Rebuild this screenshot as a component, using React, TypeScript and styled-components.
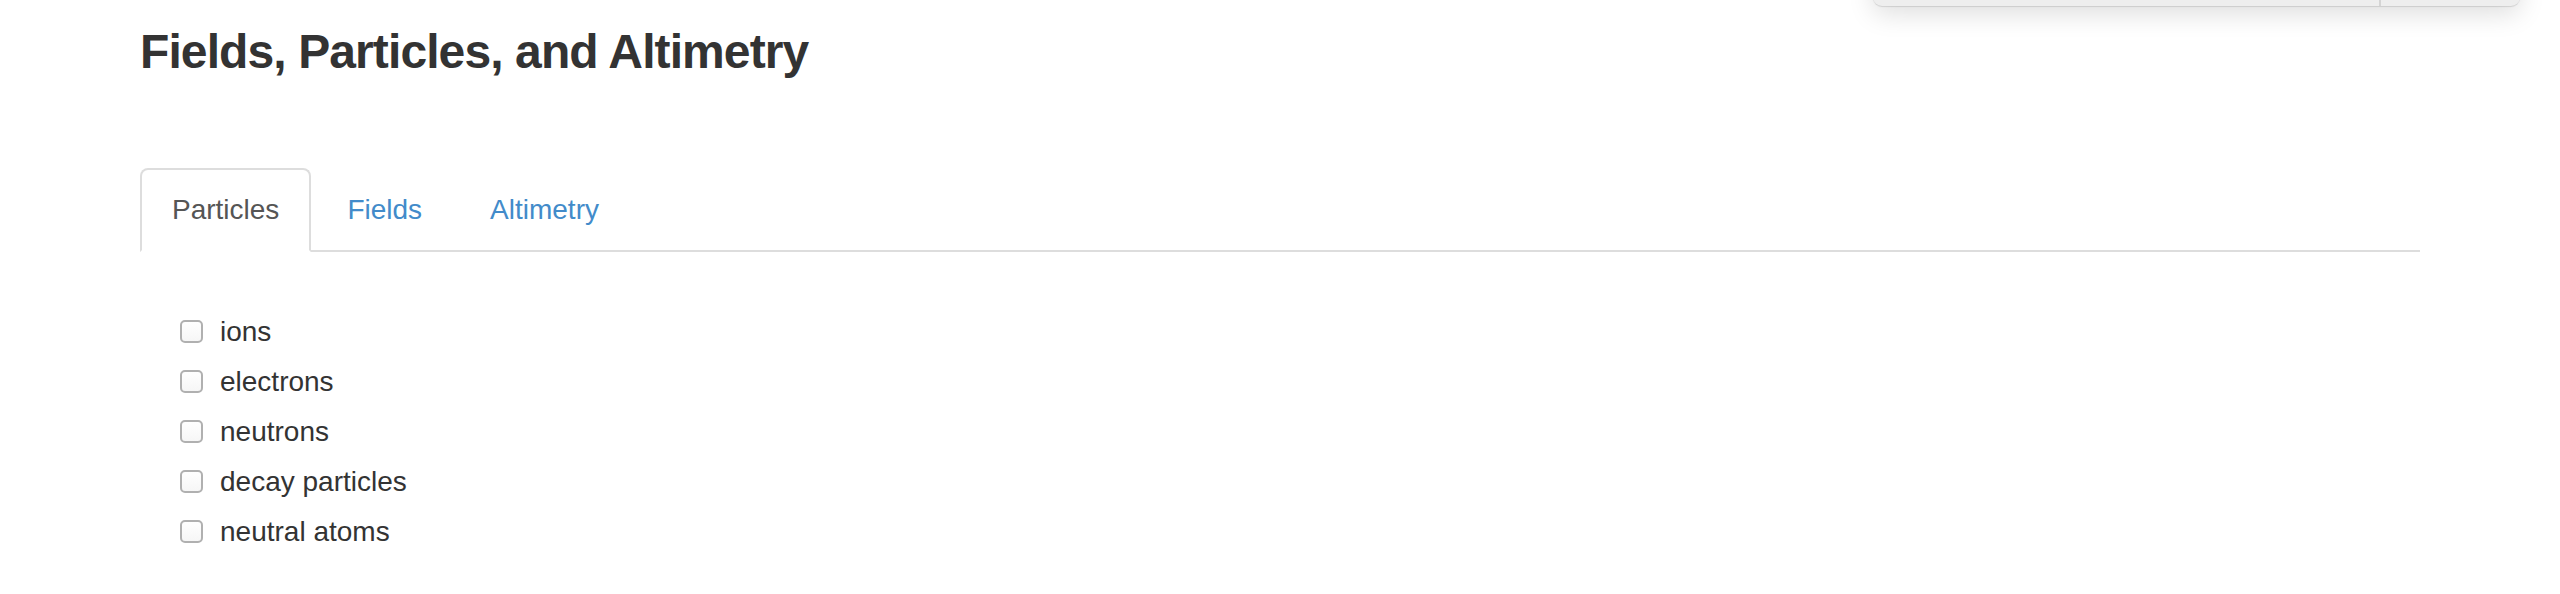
import React, { useState } from "react";
import styled, { createGlobalStyle } from "styled-components";

const GlobalStyle = createGlobalStyle`
  html, body {
    margin: 0;
    padding: 0;
    background: #ffffff;
  }
  body {
    font-family: "Liberation Sans", Arial, Helvetica, sans-serif;
    color: #333333;
    overflow: hidden;
  }
`;

const Page = styled.div`
  position: relative;
  width: 2560px;
  height: 594px;
  overflow: hidden;
  background: #ffffff;
`;

const FloatingBar = styled.div`
  position: absolute;
  top: -40px;
  left: 1873px;
  width: 647px;
  height: 46px;
  display: flex;
  justify-content: flex-end;
  background: #eeeeee;
  border-radius: 9px;
  box-shadow: 0 1px 1px rgba(0, 0, 0, 0.12), 0 8px 26px rgba(0, 0, 0, 0.13);
`;

const BarDivider = styled.div`
  width: 2px;
  height: 100%;
  margin-right: 139px;
  background: #d4d4d4;
`;

const Container = styled.div`
  width: 2280px;
  margin: 0 auto;
  padding-top: 26px;
  display: flex;
  flex-direction: column;
`;

const Title = styled.h3`
  margin: 0;
  font-size: 48px;
  line-height: 52.8px;
  font-weight: 700;
  letter-spacing: -0.9px;
  color: #333333;
`;

const TabList = styled.ul`
  list-style: none;
  margin: 89px 0 0;
  padding: 0;
  display: flex;
  border-bottom: 2px solid #dddddd;
`;

const TabItem = styled.li`
  margin: 0 4px -2px 0;
`;

const TabLink = styled.a<{ $active: boolean }>`
  display: block;
  padding: 20px 30px;
  font-size: 28px;
  line-height: 40px;
  text-decoration: none;
  cursor: pointer;
  border: 2px solid ${(p) => (p.$active ? "#dddddd" : "transparent")};
  border-bottom-color: ${(p) => (p.$active ? "#ffffff" : "transparent")};
  border-radius: 8px 8px 0 0;
  background: ${(p) => (p.$active ? "#ffffff" : "transparent")};
  color: ${(p) => (p.$active ? "#555555" : "#428bca")};
`;

const OptionList = styled.div`
  margin-top: 60px;
  padding-left: 40px;
  display: flex;
  flex-direction: column;
  gap: 10px;
`;

const OptionLabel = styled.label`
  display: flex;
  align-items: flex-start;
  gap: 17px;
  font-size: 28px;
  line-height: 40px;
  color: #333333;
  cursor: pointer;
`;

const Box = styled.input`
  appearance: none;
  -webkit-appearance: none;
  width: 23px;
  height: 23px;
  margin: 8px 0 0;
  box-sizing: border-box;
  border: 2px solid #b0b0b0;
  border-radius: 5px;
  background: linear-gradient(#ffffff, #f6f6f6);
  flex: none;
  &:checked {
    background: #3b99fc;
    border-color: #2f86e0;
  }
`;

const tabs = ["Particles", "Fields", "Altimetry"];
const options = ["ions", "electrons", "neutrons", "decay particles", "neutral atoms"];

export default function App() {
  const [active, setActive] = useState("Particles");
  return (
    <Page>
      <GlobalStyle />
      <FloatingBar>
        <BarDivider />
      </FloatingBar>
      <Container>
        <Title>Fields, Particles, and Altimetry</Title>
        <TabList>
          {tabs.map((t) => (
            <TabItem key={t}>
              <TabLink $active={t === active} onClick={() => setActive(t)}>
                {t}
              </TabLink>
            </TabItem>
          ))}
        </TabList>
        <OptionList>
          {options.map((o) => (
            <OptionLabel key={o}>
              <Box type="checkbox" />
              {o}
            </OptionLabel>
          ))}
        </OptionList>
      </Container>
    </Page>
  );
}
